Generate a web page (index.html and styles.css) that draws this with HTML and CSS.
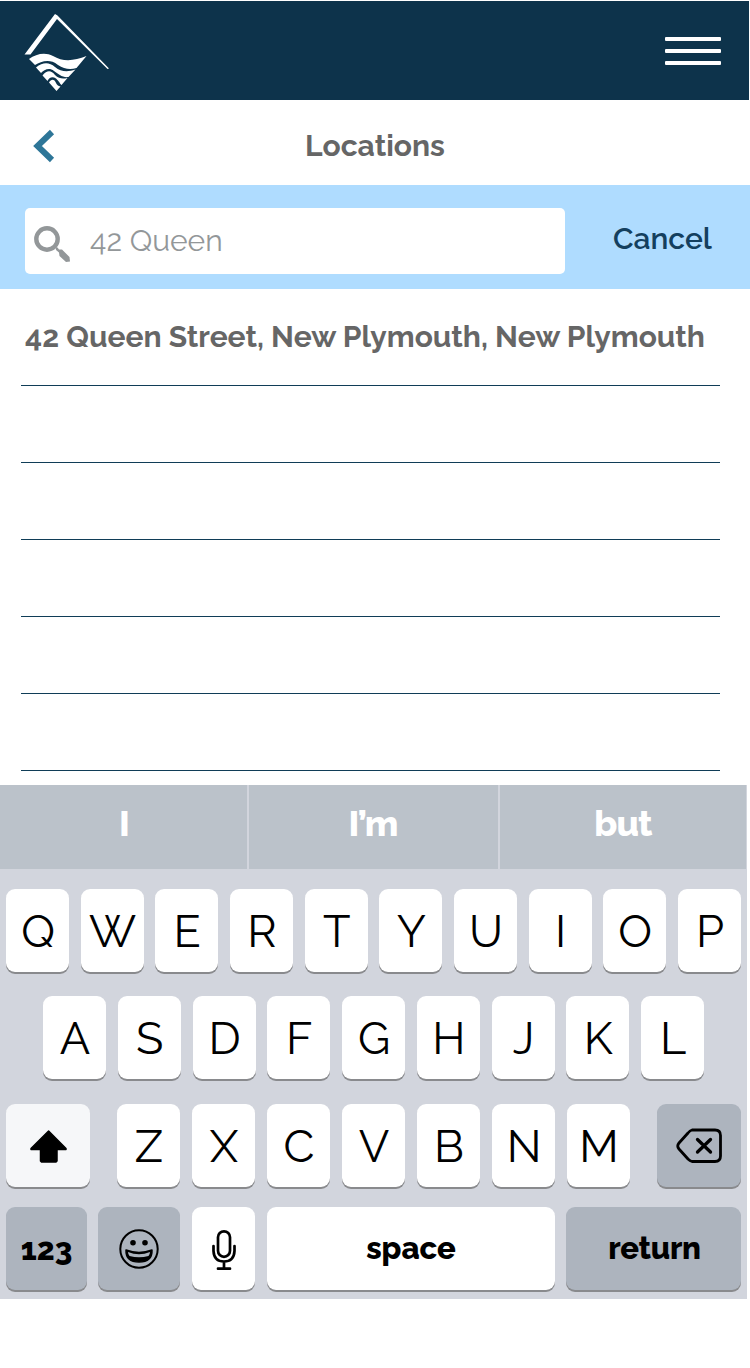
FILE: index.html
```html
<!DOCTYPE html>
<html lang="en">
<head>
<meta charset="utf-8">
<title>Locations</title>
<link rel="stylesheet" href="styles.css">
</head>
<body>
<header class="topbar">
  <svg class="logo" width="90" height="84" viewBox="22 11 90 84" fill="#fff">
    <path d="M55 14L57.5 15.500L109 68.500L107.500 69L57 19L30.500 54.500L24.500 54.500Z"/>
    <path d="M29 59C36 54 45 52 53 56C63 62 74 61 86.500 56L76.500 68C70 70 64 69 58 65C49 58 41 62 35 65Z"/>
    <path d="M36 67.500C43 62 49 62 55 67C61 72 68 72 75.500 69.500L68.500 77C63 78 58 74 54 71C49 67 44 70 41 73Z"/>
    <path d="M42.500 75.500C47 70 51 70 55 75C59 79 63 79 67.500 78L61.500 85C60 84 59 81 56 78.500C52 76 49 78 47.500 81Z"/>
    <path d="M49 82.500C51 79 54 79 55.500 82C57 85 58 86 60.500 86.500L56.500 91Z"/>
  </svg>
  <div class="menu"><i></i><i></i><i></i></div>
</header>
<div class="titlebar">
  <svg class="back" width="24" height="36" viewBox="32 128 24 36"><path d="M52 132L37.500 146L52 160" fill="none" stroke="#2e7698" stroke-width="6"/></svg>
  <h1>Locations</h1>
</div>
<div class="search">
  <div class="field">
    <svg width="40" height="40" viewBox="32 224 40 40"><circle cx="47" cy="239" r="10.700" fill="none" stroke="#939799" stroke-width="4.400"/><path d="M55.500 247L57.500 247.500L59 249.500L62 249.500L69.500 257L70 261.500L66 262L59.500 256L59 252.500L56 250Z" fill="#939799"/></svg>
    <span class="query">42 Queen</span>
  </div>
  <span class="cancel">Cancel</span>
</div>
<ul class="results">
  <li>42 Queen Street, New Plymouth, New Plymouth</li>
  <li></li><li></li><li></li><li></li><li></li>
</ul>
<div class="keyboard">
  <div class="suggest"><span>I</span><span>I’m</span><span class="tight">but</span></div>
  <div class="keys">
    <div class="row"><b>Q</b><b>W</b><b>E</b><b>R</b><b>T</b><b>Y</b><b>U</b><b>I</b><b>O</b><b>P</b></div>
    <div class="row middle"><b>A</b><b>S</b><b>D</b><b>F</b><b>G</b><b>H</b><b>J</b><b>K</b><b>L</b></div>
    <div class="row">
      <b class="wide shift"><svg width="38" height="34" viewBox="28 1128 38 34"><path d="M47.600 1130L65 1147.500V1148.500H56V1160L55 1161H40.500L39.500 1160V1148.500H30V1147.500Z" stroke="#000" stroke-width="1.500" stroke-linejoin="round"/></svg></b>
      <div class="group"><b>Z</b><b>X</b><b>C</b><b>V</b><b>B</b><b>N</b><b>M</b></div>
      <b class="wide gray"><svg width="46" height="36" viewBox="676 1128 46 36" fill="none" stroke="#000" stroke-width="2.800" stroke-linecap="round" stroke-linejoin="round"><path d="M692 1130H715Q720.500 1130 720.500 1135.500V1156Q720.500 1161.500 715 1161.500H692Q690 1161 688 1159L679 1149Q676.500 1146 679 1143L688 1133Q690 1130.500 692 1130Z"/><path stroke-width="3.300" d="M697.500 1139.500L710.500 1152M710.500 1139.500L697.500 1152"/></svg></b>
    </div>
    <div class="row last">
      <b class="gray word num">123</b>
      <b class="gray emoji"><svg width="42" height="42" viewBox="118 1228 42 42"><circle cx="139" cy="1249" r="18.700" fill="none" stroke="#000" stroke-width="2"/><circle cx="133" cy="1242.700" r="2.800"/><circle cx="145" cy="1242.700" r="2.800"/><path d="M126 1250Q139 1255 152 1250Q152.500 1262 139 1262Q125.500 1262 126 1250Z" stroke="#000" stroke-width="1.500" stroke-linejoin="round"/><path d="M128 1252Q139 1256.500 150 1252Q150 1254 148.500 1256Q139 1258.500 129.500 1256Q128 1254 128 1252Z" fill="#adb4be"/></svg></b>
      <b class="mic"><svg width="26" height="42" viewBox="211 1229 26 42" fill="none" stroke="#000" stroke-width="2.700" stroke-linecap="round"><rect x="218" y="1231.300" width="12" height="25.500" rx="6"/><path d="M213.500 1246V1251Q214 1261.500 224 1261.500Q234 1261.500 234.500 1251V1246M224 1262V1268.500M218 1268.700H230"/></svg></b>
      <b class="word space">space</b>
      <b class="gray word return">return</b>
    </div>
  </div>
</div>
</body>
</html>
```

FILE: styles.css
```css
* { box-sizing: border-box; }
body { margin: 0; padding-top: 1px; width: 750px; height: 1368px; background: #fff; font-family: Raleway, Lato, "Open Sans", sans-serif; overflow: hidden; }
svg { display: block; flex: none; }
.topbar { width: 749px; height: 99px; background: #0d334b; display: flex; justify-content: space-between; padding: 10px 28px 0 22px; }
.menu { display: flex; flex-direction: column; gap: 8px; padding-top: 26px; }
.menu i { width: 56px; height: 4px; border-radius: 1px; background: #fff; }
.titlebar { height: 85px; display: grid; grid-template-columns: 24px 1fr 24px; padding: 0 32px; align-items: center; }
.back { margin-top: 7px; }
h1 { margin: 6px 0 0; font-size: 30px; line-height: 40px; font-weight: 700; color: #666; text-align: center; }
.search { height: 104px; background: #afdcff; display: flex; padding: 23px 0 0 25px; }
.field { width: 540px; height: 66px; border-radius: 5px; background: #fff; display: flex; padding: 16px 0 0 7px; }
.query { margin: -2px 0 0 18px; font-size: 30px; line-height: 38px; font-weight: 400; color: #939799; white-space: nowrap; }
.cancel { margin-left: 48px; padding-top: 11px; font-size: 30px; line-height: 40px; font-weight: 600; color: #143f5e; }
.results { list-style: none; margin: 0 30px 0 21px; padding: 20px 0 0; height: 496px; }
.results li { height: 77px; border-bottom: 1px solid #103d57; padding: 8px 0 0 4px; font-size: 30px; line-height: 40px; font-weight: 700; color: #666; white-space: nowrap; }
.keyboard { width: 747px; height: 514px; background: #d2d5dd; }
.suggest { height: 84px; display: grid; grid-template-columns: 247px 249px 247px; gap: 2px; color: #fff; font-weight: 800; font-size: 36px; line-height: 77px; text-align: center; }
.suggest span { background: #bbc2ca; }
.suggest span:first-child { padding-left: 2px; }
.suggest span:last-child { width: 246px; }
.tight { letter-spacing: -.8px; }
.keys { display: grid; grid-template-rows: 107px 108px 103px 85px; padding: 20px 6px 0; }
.row { display: flex; justify-content: space-between; align-items: flex-start; }
.middle { padding: 0 37px; }
.group { display: flex; justify-content: space-between; width: 513px; }
b { width: 63px; height: 83px; border-radius: 9px; background: #fff; box-shadow: 0 2px 0 #898a8d; display: flex; justify-content: center; align-items: center; padding: 2px 0 0 1px; color: #000; font-weight: 400; font-size: 45px; line-height: 1; }
.wide { width: 84px; padding: 1px 0 0; }
.shift { background: #f6f7f9; padding-right: 1px; }
.gray { background: #adb4be; }
.last { justify-content: flex-start; }
.word { font-weight: 800; font-size: 31px; padding: 0; }
.num { width: 81px; margin-right: 11px; padding-top: 2px; }
.emoji { width: 82px; margin-right: 12px; padding: 1px 0 0; }
.mic { margin-right: 12px; padding: 3px 0 0; }
.space { width: 288px; margin-right: 11px; }
.return { width: 175px; padding-left: 2px; letter-spacing: -.3px; }
```
